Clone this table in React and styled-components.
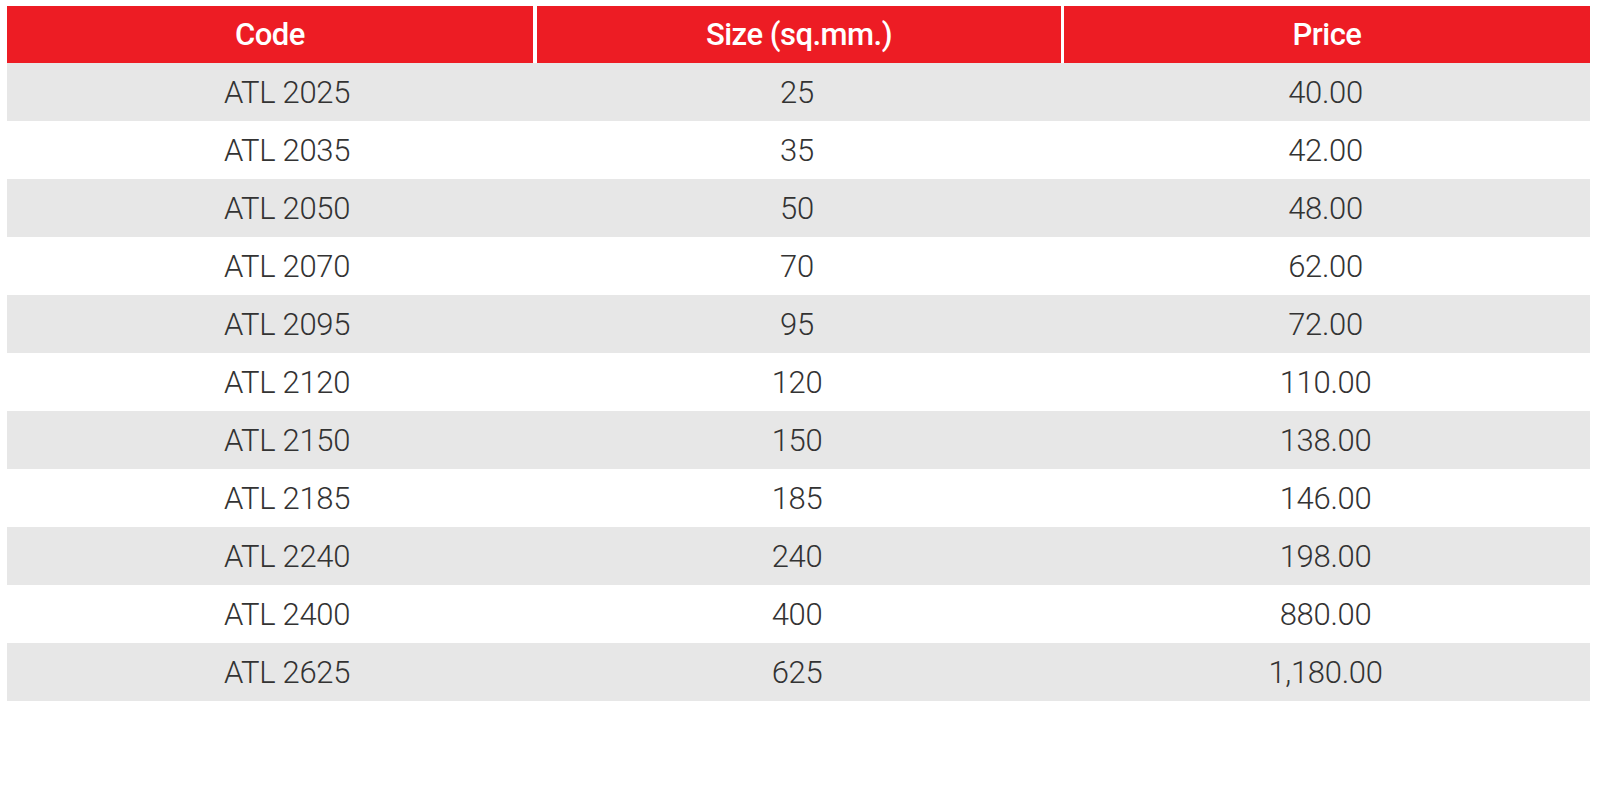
import React from "react";
import styled, { createGlobalStyle } from "styled-components";

const Global = createGlobalStyle`
  html, body { margin: 0; padding: 0; background: #ffffff; }
  body { font-family: Roboto, "Liberation Sans", Arial, sans-serif; }
`;

const Page = styled.div`
  padding: 6px 10px 0 7px;
`;

const Table = styled.table`
  width: 1583px;
  border-collapse: separate;
  border-spacing: 0;
  table-layout: fixed;
`;

const HeadCell = styled.th`
  height: 57px;
  padding: 0;
  background: #ed1c24;
  color: #ffffff;
  font-family: Roboto, "Liberation Sans", Arial, sans-serif;
  font-weight: 500;
  font-size: 31px;
  letter-spacing: -0.5px;
  text-align: center;
  vertical-align: middle;
  border-left: ${(p) => (p.$first ? "0" : `${p.$gap}px solid #ffffff`)};
`;

const Row = styled.tr`
  background: ${(p) => (p.$shaded ? "#e7e7e7" : "#ffffff")};
`;

const Cell = styled.td`
  box-sizing: border-box;
  height: 58px;
  padding: 2px 0 0 ${(p) => p.$indent || 0}px;
  color: #333333;
  font-family: Roboto, "Liberation Sans", Arial, sans-serif;
  font-weight: 300;
  font-size: 31px;
  line-height: 36px;
  letter-spacing: -0.3px;
  text-align: center;
  vertical-align: middle;
`;

const rows = [
  ["ATL 2025", "25", "40.00"],
  ["ATL 2035", "35", "42.00"],
  ["ATL 2050", "50", "48.00"],
  ["ATL 2070", "70", "62.00"],
  ["ATL 2095", "95", "72.00"],
  ["ATL 2120", "120", "110.00"],
  ["ATL 2150", "150", "138.00"],
  ["ATL 2185", "185", "146.00"],
  ["ATL 2240", "240", "198.00"],
  ["ATL 2400", "400", "880.00"],
  ["ATL 2625", "625", "1,180.00"],
];

export default function App() {
  return (
    <Page>
      <Global />
      <Table>
        <colgroup>
          <col style={{ width: 526 }} />
          <col style={{ width: 528 }} />
          <col style={{ width: 529 }} />
        </colgroup>
        <thead>
          <tr>
            <HeadCell $first>Code</HeadCell>
            <HeadCell $gap={4}>Size (sq.mm.)</HeadCell>
            <HeadCell $gap={3}>Price</HeadCell>
          </tr>
        </thead>
        <tbody>
          {rows.map((r, i) => (
            <Row key={r[0]} $shaded={i % 2 === 0}>
              <Cell $indent={34}>{r[0]}</Cell>
              <Cell>{r[1]}</Cell>
              <Cell>{r[2]}</Cell>
            </Row>
          ))}
        </tbody>
      </Table>
    </Page>
  );
}
